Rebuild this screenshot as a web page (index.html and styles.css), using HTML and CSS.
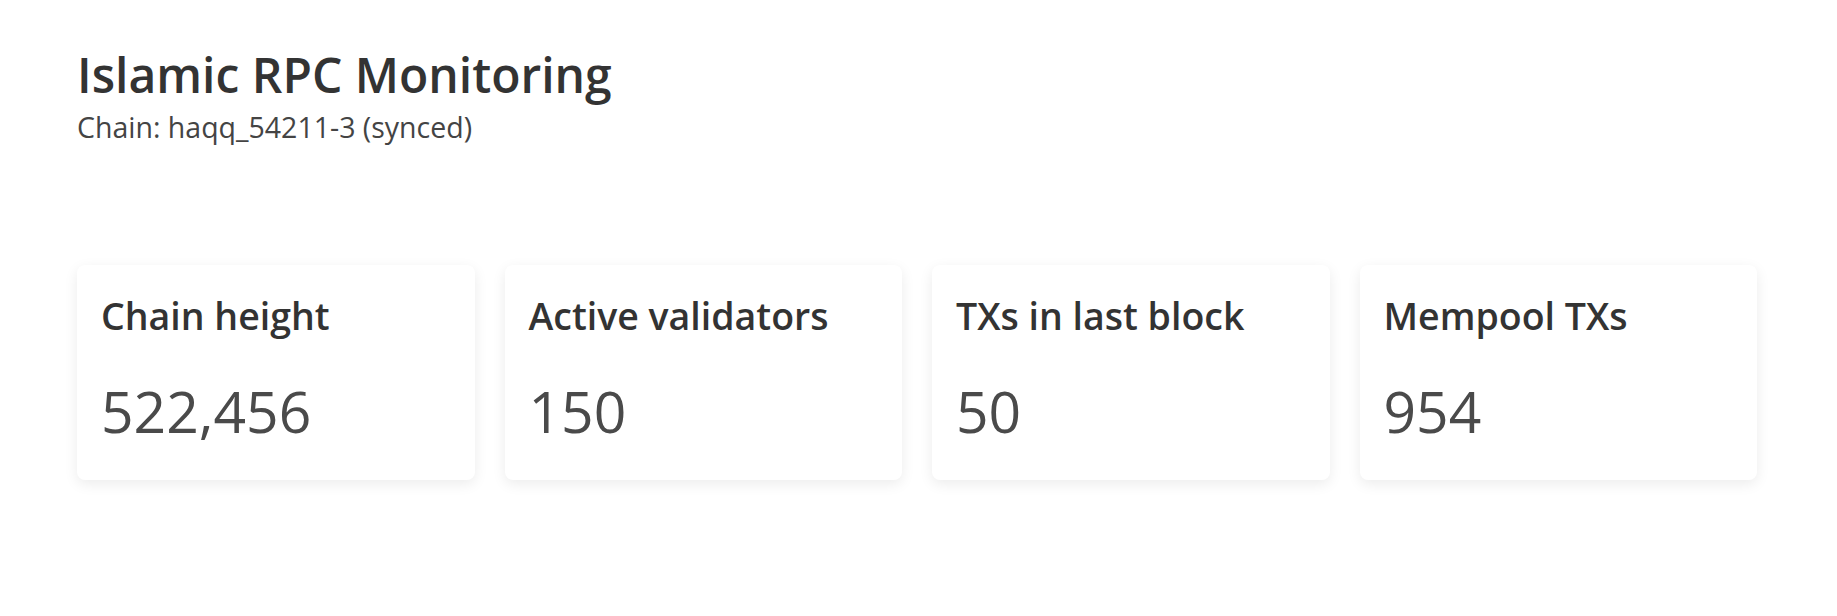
FILE: index.html
```html
<!DOCTYPE html>
<html lang="en">
<head>
<meta charset="utf-8">
<title>Islamic RPC Monitoring</title>
<link rel="stylesheet" href="styles.css">
</head>
<body>
<main class="page">
  <header class="header">
    <h1 class="title">Islamic RPC Monitoring</h1>
    <p class="subtitle">Chain: haqq_54211-3 (synced)</p>
  </header>
  <section class="stats">
    <div class="card">
      <h2 class="card-title">Chain height</h2>
      <div class="card-value">522,456</div>
    </div>
    <div class="card">
      <h2 class="card-title">Active validators</h2>
      <div class="card-value">150</div>
    </div>
    <div class="card">
      <h2 class="card-title">TXs in last block</h2>
      <div class="card-value">50</div>
    </div>
    <div class="card">
      <h2 class="card-title">Mempool TXs</h2>
      <div class="card-value">954</div>
    </div>
  </section>
</main>
</body>
</html>
```
FILE: styles.css
```css
* { box-sizing: border-box; }
html, body { margin: 0; padding: 0; background: #ffffff; }
body {
  font-family: "Open Sans", "Noto Sans", "Liberation Sans", sans-serif;
  color: #333333;
}
.page {
  padding: 43px 80px 40px 77px;
}
.header {
  display: flex;
  flex-direction: column;
  gap: 1px;
}
.title {
  margin: 0;
  font-size: 48px;
  font-weight: 600;
  line-height: 64px;
  color: #333333;
}
.subtitle {
  margin: 0;
  font-size: 28.5px;
  line-height: 38px;
  color: #444444;
}
.stats {
  margin-top: 119px;
  display: grid;
  grid-template-columns: repeat(4, 1fr);
  gap: 30px;
}
.card {
  background: #ffffff;
  border-radius: 8px;
  box-shadow: 0 4px 14px rgba(0, 0, 0, 0.08);
  padding: 25px 24px 26px;
  display: flex;
  flex-direction: column;
  gap: 31px;
  height: 215px;
}
.card-title {
  margin: 0;
  font-size: 37.5px;
  line-height: 51px;
  font-weight: 600;
  color: #333333;
}
.card-value {
  font-size: 57px;
  line-height: 79px;
  font-weight: 400;
  color: #4a4a4a;
}
```
